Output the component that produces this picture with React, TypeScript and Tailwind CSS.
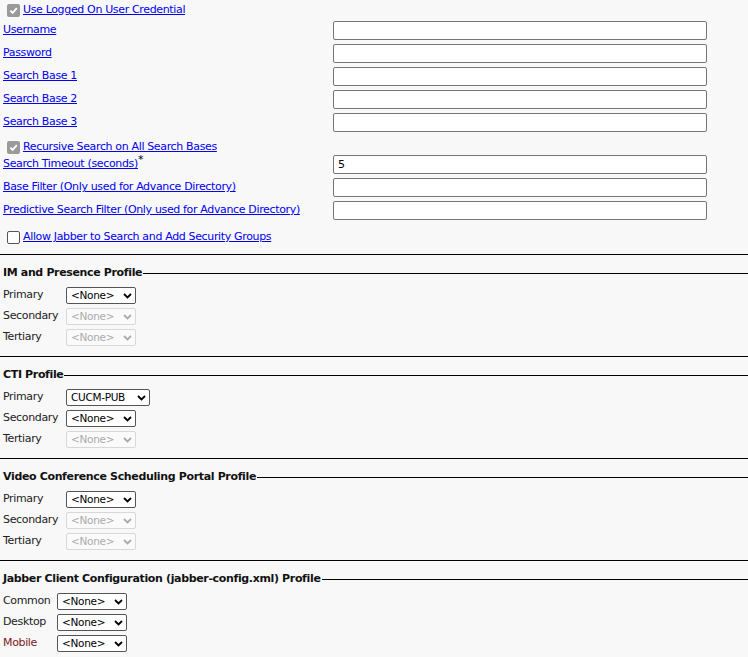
import React from "react";

const F = { fontFamily: "'DejaVu Sans', sans-serif" };

function Check({ checked, label, h = 23 }: { checked: boolean; label: string; h?: number }) {
  return (
    <div style={{ height: h }} className="flex items-center pl-[7px]">
      <span className={`w-[13px] h-[13px] rounded-[2px] flex items-center justify-center ${checked ? "bg-[#9a9a9a]" : "border border-[#555] bg-white"}`}>
        {checked && (
          <svg width="9" height="9" viewBox="0 0 10 10"><path d="M1.5 5.2 L4 7.7 L8.7 2.3" stroke="white" strokeWidth="2" fill="none" /></svg>
        )}
      </span>
      <a className="text-[#0000ee] underline ml-[3px] whitespace-nowrap">{label}</a>
    </div>
  );
}

function Field({ label, value, star }: { label: string; value?: string; star?: boolean }) {
  return (
    <div className="flex items-center h-[23px]">
      <div className="w-[333px] pl-[3px] flex items-start whitespace-nowrap">
        <a className="text-[#0000ee] underline">{label}</a>
        {star && <span className="text-black -mt-[4px]">*</span>}
      </div>
      <div className="w-[374px] h-[19px] border border-[#767676] rounded-[2px] bg-white text-[11px] pl-[4px] leading-[17px]">{value}</div>
    </div>
  );
}

function Sel({ v, disabled, w }: { v: string; disabled?: boolean; w: number }) {
  return (
    <div style={{ width: w }} className={`h-[17px] border rounded-[2px] flex items-center justify-between pl-[4px] pr-[3px] text-[10.5px] tracking-[-0.3px] ${disabled ? "border-[#d8d8d8] text-[#aaa] bg-[#fafafa]" : "border-[#555] text-black bg-white"}`}>
      <span>{v}</span>
      <svg width="9" height="6" viewBox="0 0 9 6"><path d="M1 1 L4.5 4.5 L8 1" stroke={disabled ? "#aaa" : "#000"} strokeWidth="1.8" fill="none" /></svg>
    </div>
  );
}

function Section({ title, rows, lw, mt = 8 }: { title: string; rows: [string, string, boolean, number, string?][]; lw: number; mt?: number }) {
  return (
    <div style={{ marginTop: mt }} className="border-t border-black">
      <div className="flex items-center h-[30px] pt-[6px]">
        <span className="font-bold pl-[3px] text-[#111] whitespace-nowrap">{title}</span>
        <div className="flex-1 border-t border-black ml-[1px]" />
      </div>
      {rows.map(([l, v, d, w, c], i) => (
        <div key={i} className="flex items-center h-[21px] pl-[3px]">
          <span style={{ width: lw, color: c || "#222" }}>{l}</span>
          <Sel v={v} disabled={d} w={w} />
        </div>
      ))}
    </div>
  );
}

export default function App() {
  return (
    <div style={F} className="w-[748px] h-[657px] bg-[#f8f8f8] text-[11px] tracking-[-0.35px] overflow-hidden">
      <Check checked label="Use Logged On User Credential" h={21} />
      <div className="-mt-[2px]" />
      <Field label="Username" />
      <Field label="Password" />
      <Field label="Search Base 1" />
      <Field label="Search Base 2" />
      <Field label="Search Base 3" />
      <div className="h-[3px]" />
      <Check checked label="Recursive Search on All Search Bases" h={20} />
      <div className="-mt-[4px]" />
      <Field label="Search Timeout (seconds)" value="5" star />
      <Field label="Base Filter (Only used for Advance Directory)" />
      <Field label="Predictive Search Filter (Only used for Advance Directory)" />
      <div className="h-[4px]" />
      <Check checked={false} label="Allow Jabber to Search and Add Security Groups" />
      <Section mt={5} title="IM and Presence Profile" lw={63} rows={[["Primary", "<None>", false, 70], ["Secondary", "<None>", true, 70], ["Tertiary", "<None>", true, 70]]} />
      <Section title="CTI Profile" lw={63} rows={[["Primary", "CUCM-PUB", false, 84], ["Secondary", "<None>", false, 70], ["Tertiary", "<None>", true, 70]]} />
      <Section title="Video Conference Scheduling Portal Profile" lw={63} rows={[["Primary", "<None>", false, 70], ["Secondary", "<None>", true, 70], ["Tertiary", "<None>", true, 70]]} />
      <Section title="Jabber Client Configuration (jabber-config.xml) Profile" lw={54} rows={[["Common", "<None>", false, 70], ["Desktop", "<None>", false, 70], ["Mobile", "<None>", false, 70, "#7a1a1a"]]} />
    </div>
  );
}
